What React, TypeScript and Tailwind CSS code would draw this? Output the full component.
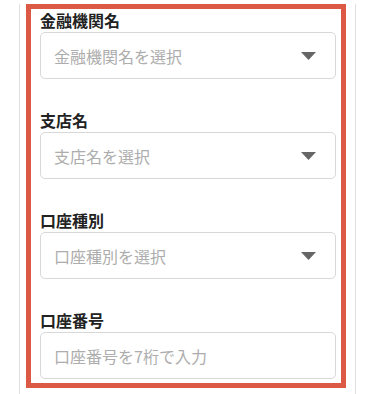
import React from "react";

const fields = [
  { label: "金融機関名", placeholder: "金融機関名を選択", select: true },
  { label: "支店名", placeholder: "支店名を選択", select: true },
  { label: "口座種別", placeholder: "口座種別を選択", select: true },
  { label: "口座番号", placeholder: "口座番号を7桁で入力", select: false },
];

export default function App() {
  return (
    <div
      className="w-[375px] h-[394px] bg-white overflow-hidden"
      style={{ fontFamily: '"Noto Sans CJK JP", "Noto Sans", sans-serif' }}
    >
      <div className="mx-[19px] h-full border-x border-[#e0e0e0] bg-white">
        <div className="mt-[4px] ml-[6px] mr-[9px] border-[5px] border-[#dc5a45] pt-[1px] pb-[4px] pl-[9px] pr-[5px] flex flex-col gap-[31px]">
          {fields.map((f) => (
            <div key={f.label} className="flex flex-col">
              <div className="h-[22px] leading-[20px] text-[16px] font-bold text-[#222222]">
                {f.label}
              </div>
              <div className="h-[47px] rounded-[5px] border border-[#d8d8d8] bg-white flex items-center justify-between pl-[13px] pr-[19px]">
                <span className="text-[16px] text-[#adadad] leading-none">
                  {f.placeholder}
                </span>
                {f.select && (
                  <svg width="15" height="8" viewBox="0 0 15 8" className="block">
                    <path d="M0 0 L15 0 L7.5 8 Z" fill="#666666" />
                  </svg>
                )}
              </div>
            </div>
          ))}
        </div>
      </div>
    </div>
  );
}
